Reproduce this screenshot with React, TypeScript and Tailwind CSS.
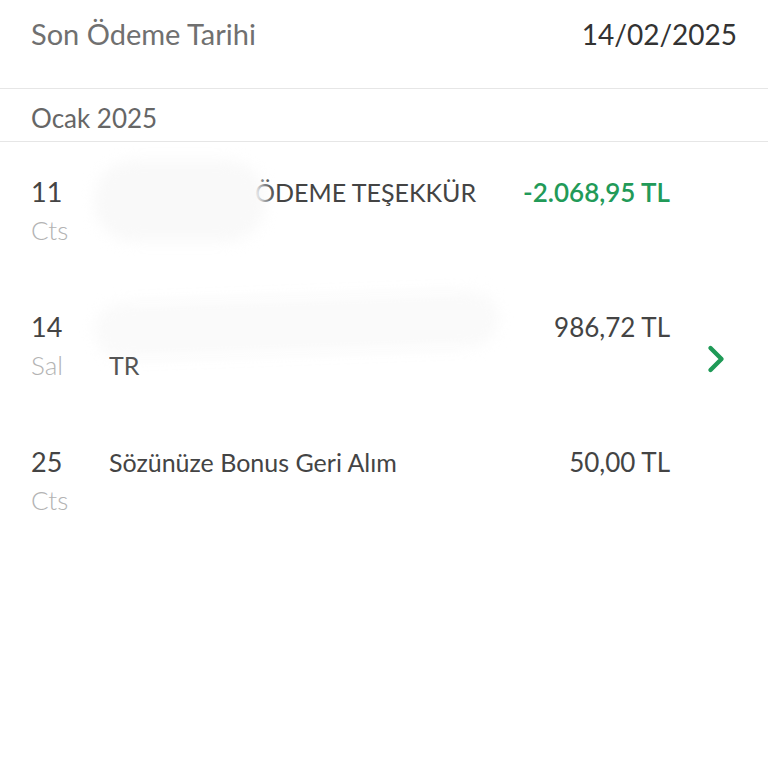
import { ChevronRight } from "lucide-react";

const font = { fontFamily: 'Lato, "DejaVu Sans", sans-serif' };

type Row = {
  day: string;
  weekday: string;
  title: string;
  sub?: string;
  amount: string;
  credit?: boolean;
  link?: boolean;
  smudge?: "short" | "long";
};

const rows: Row[] = [
  { day: "11", weekday: "Cts", title: "ÖDEME TEŞEKKÜR", amount: "-2.068,95 TL", credit: true, smudge: "short" },
  { day: "14", weekday: "Sal", title: "", sub: "TR", amount: "986,72 TL", link: true, smudge: "long" },
  { day: "25", weekday: "Cts", title: "Sözünüze Bonus Geri Alım", amount: "50,00 TL" },
];

const TransactionRow = ({ row }: { row: Row }) => {
  return (
    <div className="relative flex h-[135px] pl-[31px] pr-[30px] pt-[34px]">
      {/* Date */}
      <div className="w-[78px] flex flex-col">
        <span className="text-[27px] leading-[32px] text-[#444]">{row.day}</span>
        <span className="text-[26px] leading-[44px] font-light text-[#b3b3b3]">{row.weekday}</span>
      </div>

      {/* Description */}
      <div className="flex-1 flex flex-col">
        <span
          className={
            row.smudge === "short"
              ? "pl-[146px] text-[25px] leading-[32px] text-[#444]"
              : "text-[25px] leading-[32px] text-[#444]"
          }
        >
          {row.title || "\u00a0"}
        </span>
        {row.sub && <span className="relative z-10 text-[25px] leading-[44px] text-[#555]">{row.sub}</span>}
      </div>

      {/* Amount */}
      <div className="flex flex-col items-end">
        <span
          className={
            row.credit
              ? "text-[26px] leading-[32px] font-semibold text-[#229a58]"
              : "text-[26px] leading-[32px] text-[#444]"
          }
        >
          {row.amount}
        </span>
      </div>
      <div className="w-[68px] flex justify-end items-start pt-[26px]">
        {row.link && <ChevronRight className="w-[44px] h-[44px] text-[#1f9a57]" strokeWidth={2.4} />}
      </div>

      {/* blurred masking over the merchant name */}
      {row.smudge === "short" && (
        <div className="absolute left-[94px] top-[18px] w-[172px] h-[82px] rounded-[40px] bg-[#f9f9f9] blur-[7px]" />
      )}
      {row.smudge === "long" && (
        <div className="absolute left-[94px] top-[20px] w-[405px] h-[56px] rounded-[40px] bg-[#fafafa] blur-[7px] -rotate-2" />
      )}
    </div>
  );
};

const App = () => {
  return (
    <div className="w-[768px] h-[768px] bg-white overflow-hidden" style={font}>
      {/* Header */}
      <div className="h-[89px] flex justify-between items-start pt-[16px] pl-[31px] pr-[31px] border-b border-[#e6e6e6]">
        <span className="text-[29px] leading-[36px] text-[#707070]">Son Ödeme Tarihi</span>
        <span className="text-[28px] leading-[36px] text-[#333]">14/02/2025</span>
      </div>

      {/* Month */}
      <div className="h-[53px] flex items-center pl-[31px] pt-[6px] border-b border-[#e6e6e6]">
        <span className="text-[26px] leading-[32px] text-[#666]">Ocak 2025</span>
      </div>

      <div>
        {rows.map((row) => (
          <TransactionRow key={row.day} row={row} />
        ))}
      </div>
    </div>
  );
};

export default App;
